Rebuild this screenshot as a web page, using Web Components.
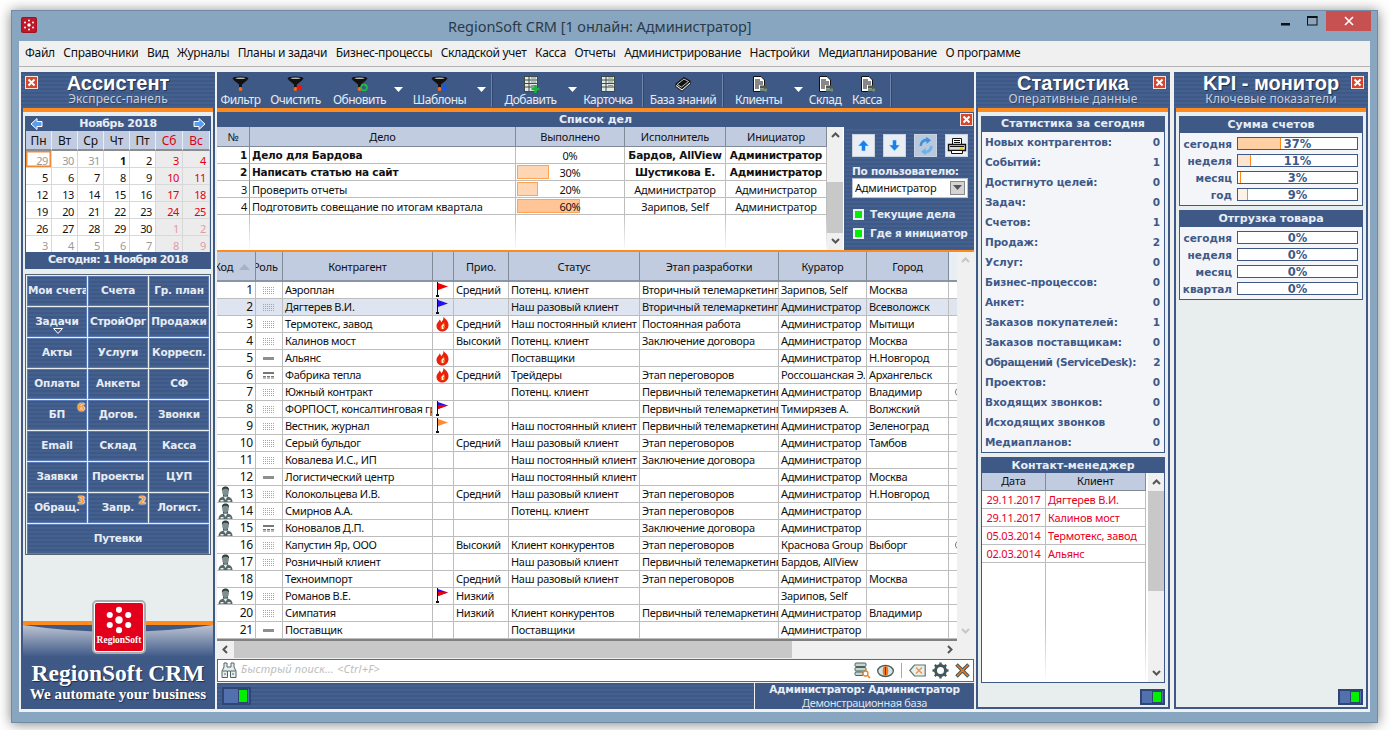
<!DOCTYPE html>
<html lang="ru">
<head>
<meta charset="utf-8">
<title>RegionSoft CRM</title>
<style>
	html, body { margin: 0; padding: 0; background: #fff; }
	body {
		width: 1390px;
		height: 730px;
		overflow: hidden;
		font: 11px/1.2 "Noto Sans", "Liberation Sans", sans-serif;
		letter-spacing: -.2px;
		color: #111;
		--bold: "DejaVu Sans", "Liberation Sans", sans-serif;
		--navy: #3f5987;
		--stripes: repeating-linear-gradient(#3f5987 0 2px, #44608f 2px 4px);
		--head: #c1cce0;
		--line: #bdbdbd;
		--orange: #ff8a1e;
	}
</style>
</head>
<body>
<crm-window>
	<crm-menu slot="menu">
		<span>Файл</span><span>Справочники</span><span>Вид</span><span>Журналы</span><span>Планы и задачи</span><span>Бизнес-процессы</span><span>Складской учет</span><span>Касса</span><span>Отчеты</span><span>Администрирование</span><span>Настройки</span><span>Медиапланирование</span><span>О программе</span>
	</crm-menu>

	<crm-panel heading="Ассистент" sub="Экспресс-панель" close="left">
		<crm-calendar></crm-calendar>
		<crm-tiles></crm-tiles>
		<crm-brand></crm-brand>
	</crm-panel>

	<crm-center>
		<crm-toolbar>
			<crm-tool icon="filter" style="--w:47px">Фильтр</crm-tool>
			<crm-tool icon="clear" style="--w:63px">Очистить</crm-tool>
			<crm-tool icon="refresh" style="--w:63px;--ml:1px">Обновить</crm-tool>
			<crm-tool-arrow style="--ml:-1px"></crm-tool-arrow>
			<crm-tool icon="template" style="--w:67px">Шаблоны</crm-tool>
			<crm-tool-arrow></crm-tool-arrow>
			<crm-tool-sep style="--ml:2px"></crm-tool-sep>
			<crm-tool icon="sheetadd" style="--w:65px;--ml:5px">Добавить</crm-tool>
			<crm-tool-arrow style="--ml:1px"></crm-tool-arrow>
			<crm-tool icon="sheet" style="--w:56px">Карточка</crm-tool>
			<crm-tool-sep style="--ml:6px"></crm-tool-sep>
			<crm-tool icon="book" style="--w:78px">База знаний</crm-tool>
			<crm-tool-sep></crm-tool-sep>
			<crm-tool icon="doc" style="--w:63px;--ml:3px">Клиенты</crm-tool>
			<crm-tool-arrow></crm-tool-arrow>
			<crm-tool icon="doc" style="--w:38px">Склад</crm-tool>
			<crm-tool icon="doc" style="--w:46px">Касса</crm-tool>
			<crm-tool-sep></crm-tool-sep>
		</crm-toolbar>
		<crm-tasks></crm-tasks>
		<crm-grid></crm-grid>
		<crm-search></crm-search>
		<crm-statusbar></crm-statusbar>
	</crm-center>

	<crm-panel heading="Статистика" sub="Оперативные данные" close="right" style="--ml:2px">
		<crm-stats heading="Статистика за сегодня">
			<crm-stat value="0">Новых контрагентов:</crm-stat>
			<crm-stat value="1">Событий:</crm-stat>
			<crm-stat value="0">Достигнуто целей:</crm-stat>
			<crm-stat value="0">Задач:</crm-stat>
			<crm-stat value="1">Счетов:</crm-stat>
			<crm-stat value="2">Продаж:</crm-stat>
			<crm-stat value="0">Услуг:</crm-stat>
			<crm-stat value="0">Бизнес-процессов:</crm-stat>
			<crm-stat value="0">Анкет:</crm-stat>
			<crm-stat value="1">Заказов покупателей:</crm-stat>
			<crm-stat value="0">Заказов поставщикам:</crm-stat>
			<crm-stat value="2" style="letter-spacing:-.45px">Обращений (ServiceDesk):</crm-stat>
			<crm-stat value="0">Проектов:</crm-stat>
			<crm-stat value="0">Входящих звонков:</crm-stat>
			<crm-stat value="0">Исходящих звонков</crm-stat>
			<crm-stat value="0">Медиапланов:</crm-stat>
		</crm-stats>
		<crm-contacts></crm-contacts>
		<crm-switch class="foot"></crm-switch>
	</crm-panel>

	<crm-panel heading="KPI - монитор" sub="Ключевые показатели" close="right" style="--ml:4px">
		<crm-kpi heading="Сумма счетов">
			<crm-kpi-bar value="37" tint="#ffd0a4">сегодня</crm-kpi-bar>
			<crm-kpi-bar value="11" tint="#ffe4d0">неделя</crm-kpi-bar>
			<crm-kpi-bar value="3" tint="#fff">месяц</crm-kpi-bar>
			<crm-kpi-bar value="9" tint="#fff1e6">год</crm-kpi-bar>
		</crm-kpi>
		<crm-kpi heading="Отгрузка товара">
			<crm-kpi-bar value="0">сегодня</crm-kpi-bar>
			<crm-kpi-bar value="0">неделя</crm-kpi-bar>
			<crm-kpi-bar value="0">месяц</crm-kpi-bar>
			<crm-kpi-bar value="0">квартал</crm-kpi-bar>
		</crm-kpi>
		<crm-switch class="foot"></crm-switch>
	</crm-panel>
</crm-window>

<script>
// shared inline icons
const funnel = extra => `<svg width="18" height="18" viewBox="0 0 18 18">
	<ellipse cx="8.500" cy="3.500" rx="8" ry="2" fill="#111"/>
	<ellipse cx="8.500" cy="3.200" rx="5" ry=".8" fill="#b9b9b9"/>
	<path d="M1 4.500 7 9.500V12H10V9.500L16 4.500z" fill="#111"/>
	<circle cx="8.500" cy="14" r="1.900" fill="#f4691b"/>${extra}</svg>`;
const sheetIcon = extra => `<svg width="18" height="18" viewBox="0 0 18 18">
	<rect x="2.500" y="1.500" width="13" height="15" fill="#e4ebe6" stroke="#3d4a45"/>
	<path d="M3 5H15M3 8.500H15M3 12H15M7 2V16" stroke="#3d4a45"/>
	<path d="M9 3H14M9 7H14M9 10.500H14" stroke="#88968f"/>${extra}</svg>`;
const docIcon = `<svg width="18" height="18" viewBox="0 0 18 18">
	<path d="M3.500 1.500H11L14.500 5V16.500H3.500z" fill="#fff" stroke="#111"/>
	<path d="M5 5H10M5 7H13M5 9H13M5 11H9M5 13H9" stroke="#111"/>
	<rect x="10" y="10.500" width="7" height="3" fill="#555"/><rect x="10" y="13.500" width="7" height="3" fill="#6d8f78"/></svg>`;
const flag = (a, b) => `<svg width="13" height="16" viewBox="0 0 13 16">
	<path d="M1.500 0V14" stroke="#111"/><rect x="0" y="13" width="3" height="2" fill="#111"/>
	<path d="M2 1 12 4.500 2 8z" fill="${a}"/>${b ? `<path d="M2 4H8L12 4.500 2 8z" fill="${b}"/>` : ""}</svg>`;
const ICONS = {
	filter: funnel(""),
	clear: funnel(`<path d="M10 10 15 15M15 10 10 15" stroke="#f01010" stroke-width="2"/>`),
	refresh: funnel(`<circle cx="13" cy="12.500" r="3" fill="none" stroke="#19c43a" stroke-width="1.600"/><path d="M12 9h3v3z" fill="#19c43a"/>`),
	template: funnel(`<path d="M12 9h2.500V12.500H17L13.200 16.500 9.500 12.500H12z" fill="#1558e8"/>`),
	sheet: sheetIcon(""),
	sheetadd: sheetIcon(`<path d="M13.500 10v8M9.500 14h8" stroke="#18b53a" stroke-width="2.400"/>`),
	doc: docIcon,
	book: `<svg width="18" height="18" viewBox="0 0 18 18"><path d="M1 9 10 2 17 6 8 14z" fill="#111"/><path d="M3 9.500 10 4 14.500 6.500 7.500 12z" fill="none" stroke="#eee" stroke-width=".8"/><path d="M1 9V12L8 17 17 9V6L8 14z" fill="#333"/><path d="M2 10.500 8 15 16 8" fill="none" stroke="#fff"/></svg>`,
	person: `<svg width="15" height="17" viewBox="0 0 15 17"><path d="M.5 16.500C.5 12 3 10.500 7.500 10.500S14.500 12 14.500 16.500z" fill="#55696a"/><path d="M5.500 10.500 7.500 14 9.500 10.500z" fill="#e6eeee"/><rect x="2.500" y="14" width="3" height="1.500" fill="#e6eeee"/><rect x="9.500" y="14" width="3" height="1.500" fill="#e6eeee"/><ellipse cx="7.500" cy="5.500" rx="3.300" ry="4.300" fill="#7d8f8f"/><path d="M4 5C3.500 1.500 5.500.5 7.500.5S11.500 1.500 11 5C10 3 9 2.800 7.500 2.800S5 3 4 5z" fill="#2e3d3d"/><path d="M5 8C6 10 9 10 10 8V10.500H5z" fill="#415252"/></svg>`,
	fire: `<svg width="13" height="16" viewBox="0 0 13 16"><path d="M7.500 .5C8.500 3 12.500 4 12.500 9 12.500 13 9.500 15.500 6.200 15.500S.3 13 .5 9.500C.7 6.500 3 6 3.500 3.500 4.800 4.500 5 5.500 5 6.500 6.500 5 7.800 3 7.500 .5z" fill="#e8200c"/><path d="M7.800 6.500C8.800 8.500 9.300 9.500 9 11.300 8.700 12.800 7.800 13.500 6.500 13.500S4.500 12.500 4.500 11.200C4.700 9.800 6 9.300 7.800 6.500z" fill="#f9702a"/><path d="M7.500 7.500 8 10H7L7.500 13H5.900L6 10.500H5z" fill="#fff0c8"/></svg>`,
	dots: `<svg width="12" height="7" viewBox="0 0 12 7"><path d="M0 .5H12M0 2.500H12M0 4.500H12M0 6.500H12" stroke="#a6a6a6" stroke-dasharray="1 1"/></svg>`,
	dash: `<svg width="12" height="7" viewBox="0 0 12 7"><rect y="2" width="11" height="3" fill="#8f8f8f"/></svg>`,
	table: `<svg width="12" height="7" viewBox="0 0 12 7"><rect width="11" height="2" fill="#777"/><path d="M0 4.500H11M0 6H11" stroke="#777" stroke-dasharray="3 1"/></svg>`,
	up: `<svg width="13" height="13" viewBox="0 0 13 13"><path d="M6.500 1 12 7H8.500V12H4.500V7H1z" fill="#1682e8" stroke="#cfe6fb" stroke-width=".6"/></svg>`,
	down: `<svg width="13" height="13" viewBox="0 0 13 13"><path d="M6.500 12 12 6H8.500V1H4.500V6H1z" fill="#1682e8" stroke="#cfe6fb" stroke-width=".6"/></svg>`,
	sync: `<svg width="18" height="18" viewBox="0 0 18 18"><path d="M9 1.500A7 7 0 0 0 2.500 9H5A4.500 4.500 0 0 1 9.500 4.500V7L14 3.200 9.500 0z" fill="#3f93dd"/><path d="M9 16.500A7 7 0 0 0 15.500 9H13A4.500 4.500 0 0 1 8.500 13.500V11L4 14.800 8.500 18z" fill="#6fb2e8"/></svg>`,
	printer: `<svg width="20" height="18" viewBox="0 0 20 18"><path d="M5.500 7V1.500H14.500V7" fill="#fff" stroke="#111"/><path d="M7 3.500H13M7 5.500H13" stroke="#111"/><path d="M1.500 7.500H18.500V13.500H1.500z" fill="#ddd" stroke="#111" stroke-width="1.400"/><path d="M3 9.500H17" stroke="#111"/><rect x="13" y="10.500" width="3" height="1.500" fill="#f0d020"/><path d="M4.500 13.500H15.500V16.500H4.500z" fill="#fff" stroke="#111"/></svg>`,
	binoculars: `<svg width="16" height="17" viewBox="0 0 16 17"><path d="M3 1H6V5H10V1H13V5L15 9V15.500H9.500V9H6.500V15.500H1V9L3 5z" fill="#e7eeee" stroke="#4f6468"/><path d="M1.500 9H6M10 9H14.500M3 12H5M11 12H13" stroke="#4f6468" stroke-width="1.200"/></svg>`,
	dbsearch: `<svg width="17" height="17" viewBox="0 0 17 17"><rect x="1" y="1" width="11" height="3.500" rx="1" fill="#c8d4cf" stroke="#4c6460"/><rect x="1" y="5.500" width="11" height="3.500" rx="1" fill="#c8d4cf" stroke="#4c6460"/><rect x="1" y="10" width="8" height="3.500" rx="1" fill="#c8d4cf" stroke="#4c6460"/><circle cx="11.500" cy="11.500" r="2.500" fill="#fff" stroke="#f08020" stroke-width="1.300"/><path d="M13.500 13.500 16 16" stroke="#f08020" stroke-width="1.600"/></svg>`,
	eye: `<svg width="17" height="14" viewBox="0 0 17 14"><ellipse cx="8.500" cy="7" rx="7.800" ry="5.500" fill="#d5e4e4" stroke="#46605e" stroke-width="1.300"/><ellipse cx="8.500" cy="7" rx="2.800" ry="5" fill="#f0751c"/><path d="M8.500 3V11" stroke="#7a3408"/></svg>`,
	eraser: `<svg width="17" height="13" viewBox="0 0 17 13"><path d="M.8 6.500 5.500 1H16.200V12H5.500z" fill="#e8f0ee" stroke="#5d7672" stroke-width="1.200"/><path d="M7 3.500 13 9.500M13 3.500 7 9.500" stroke="#f0923c" stroke-width="1.300"/></svg>`,
	gear: `<svg width="17" height="17" viewBox="0 0 17 17"><circle cx="8.500" cy="8.500" r="5" fill="none" stroke="#43585a" stroke-width="3"/><path d="M8.500 .5V3.500M8.500 13.500V16.500M.5 8.500H3.500M13.500 8.500H16.500M2.800 2.800 5 5M12 12 14.200 14.200M14.200 2.800 12 5M5 12 2.800 14.200" stroke="#43585a" stroke-width="2.400"/></svg>`,
	xmark: `<svg width="15" height="15" viewBox="0 0 15 15"><path d="M1.500 1.500 13.500 13.500M13.500 1.500 1.500 13.500" stroke="#45585a" stroke-width="3.600"/><path d="M2 2 13 13M13 2 2 13" stroke="#f07a20" stroke-width="1.500"/></svg>`
};
const closeBox = `<svg width="13" height="13" viewBox="0 0 13 13"><rect width="13" height="13" fill="#d8452a"/><rect x=".5" y=".5" width="12" height="12" fill="none" stroke="#f6e4dc"/><path d="M3.500 3.500 9.500 9.500M9.500 3.500 3.500 9.500" stroke="#fff" stroke-width="2"/></svg>`;
const chevron = (dir, c = "#555") => `<svg width="9" height="6" viewBox="0 0 9 6"><path d="${dir == "up" ? "M1 5 4.500 1.500 8 5" : "M1 1 4.500 4.500 8 1"}" fill="none" stroke="${c}" stroke-width="2"/></svg>`;

// tiny base class, every element keeps its own style in an open shadow root
class Base extends HTMLElement {
	constructor() {
		super();
		this.attachShadow({mode: "open"});
	}
	connectedCallback() {
		this.shadowRoot.innerHTML = this.render();
	}
	attr(name, fallback = "") {
		const v = this.getAttribute(name);
		return v === null ? fallback : v;
	}
}

class CrmWindow extends Base {
	render() {
		return `<style>
			:host { display: block; box-sizing: border-box; width: 1367px; height: 713px; margin: 10px 0 0 11px; background: #88a6c0; border: 1px solid #6f8ba5; box-shadow: 0 1px 12px rgba(0,0,0,.5); }
			.title { display: flex; align-items: flex-start; height: 30px; }
			.logo { margin: 6px 0 0 9px; }
			h1 { margin: 6px 0 0 411px; font: 14.500px/18px "Noto Sans", sans-serif; color: #2b3a48; letter-spacing: -.05px; white-space: nowrap; }
			.ctl { margin-left: auto; display: flex; margin-right: 6px; }
			.ctl span { display: grid; place-items: center; width: 27px; height: 20px; }
			.ctl .x { width: 45px; background: #c75050; margin-left: 0; }
			.client { background: #f0f0f0; margin: 0 7px 0 7px; height: 671px; display: flex; flex-direction: column; }
			.work { display: flex; padding: 5px 0 0 2px; }
		</style>
		<div class="title">
			<svg class="logo" width="16" height="16" viewBox="0 0 16 16"><rect width="16" height="16" rx="2" fill="#a01220"/><rect x="1" y="1" width="14" height="14" rx="2" fill="#c01828"/><g fill="#fff"><circle cx="8" cy="8" r="1.700"/><circle cx="8" cy="3.500" r="1"/><circle cx="8" cy="12.500" r="1"/><circle cx="4" cy="5.500" r="1"/><circle cx="12" cy="5.500" r="1"/><circle cx="4" cy="10.500" r="1"/><circle cx="12" cy="10.500" r="1"/></g></svg>
			<h1>RegionSoft CRM [1 онлайн: Администратор]</h1>
			<div class="ctl">
				<span><svg width="10" height="10" viewBox="0 0 10 10"><rect y="7" width="9" height="2.500" fill="#111"/></svg></span>
				<span><svg width="11" height="10" viewBox="0 0 11 10"><rect x=".5" y="1" width="9.500" height="8" fill="none" stroke="#111"/><rect y="0" width="10.500" height="2" fill="#111"/></svg></span>
				<span class="x"><svg width="10" height="10" viewBox="0 0 10 10"><path d="M1 1 9 9M9 1 1 9" stroke="#fff" stroke-width="1.600"/></svg></span>
			</div>
		</div>
		<div class="client">
			<slot name="menu"></slot>
			<div class="work"><slot></slot></div>
		</div>`;
	}
}

class CrmMenu extends Base {
	render() {
		return `<style>
			:host { display: block; height: 26px; box-sizing: border-box; font-size: 12px; letter-spacing: -.3px; color: #111; }
			div { display: flex; gap: 8.500px; align-items: center; height: 25px; padding-left: 6px; border-bottom: 1px solid #b4b4b4; white-space: nowrap; }
		</style><div><slot></slot></div>`;
	}
}

class CrmPanel extends Base {
	render() {
		const side = this.attr("close", "right");
		return `<style>
			:host { display: flex; flex-direction: column; box-sizing: border-box; flex: 0 0 194px; width: 194px; min-width: 0; height: 637px; margin-left: var(--ml, 0); background: #e8eeee; border: 2px solid var(--navy); position: relative; }
			header { box-sizing: border-box; flex: none; height: 36px; margin: -2px -2px 0; background: var(--stripes); padding-top: 2px; text-align: center; color: #fff; letter-spacing: 0; }
			h2 { margin: 0; font: bold 20px/19px "Liberation Sans", sans-serif; text-shadow: 1px 1px 1px #1d2c4a; }
			p { margin: 0; font-size: 12px; line-height: 12px; color: #c7d0de; letter-spacing: .1px; text-shadow: 1px 1px 0 #33486e; }
			.rule { height: 4px; background: var(--orange); flex: none; }
			.close { position: absolute; top: 2px; line-height: 0; ${side == "left" ? "left: 2px;" : "right: 2px;"} }
			main { display: flex; flex-direction: column; flex: 1; min-height: 0; min-width: 0; }
		</style>
		<header><h2>${this.attr("heading")}</h2><p>${this.attr("sub")}</p></header>
		<div class="rule"></div>
		<span class="close">${closeBox}</span>
		<main><slot></slot></main>`;
	}
}

class CrmCalendar extends Base {
	render() {
		const names = ["Пн", "Вт", "Ср", "Чт", "Пт", "Сб", "Вс"];
		const days = [29,30,31,1,2,3,4,5,6,7,8,9,10,11,12,13,14,15,16,17,18,19,20,21,22,23,24,25,26,27,28,29,30,1,2,3,4,5,6,7,8,9];
		const cells = days.map((d, i) => {
			const other = i < 3 || i > 32;
			const we = i % 7 > 4;
			let c = "d" + (other ? " o" : "") + (we ? " w" : "") + (i == 0 ? " t" : "") + (i == 3 ? " b" : "");
			return `<span class="${c}">${d}</span>`;
		}).join("");
		return `<style>
			:host { display: block; flex: none; margin: 4px 0 0 2px; width: 186px; box-sizing: border-box; border: 1px solid var(--navy); border-top: 0; background: #fff; letter-spacing: 0; }
			.top { display: flex; justify-content: space-between; align-items: center; box-sizing: border-box; height: 15px; margin: 0 -1px; padding: 1px 5px 0; background: var(--navy); color: #e8eef6; font: bold 11px/14px var(--bold); letter-spacing: -.3px; }
			.g { display: grid; grid-template-columns: repeat(5, 26px) 27px 27px; }
			.n { height: 20px; box-sizing: border-box; display: grid; place-items: center; padding-top: 2px; background: var(--head); border-right: 1px solid #e8eef5; border-bottom: 2px solid #8c8c8c; font-size: 12px; letter-spacing: -.2px; }
			.n.r { color: #e00012; }
			.days { height: 101px; overflow: hidden; }
			.d { height: 17px; box-sizing: border-box; text-align: right; padding: 2px 3px 0 0; font-size: 11px; letter-spacing: -.4px; line-height: 15px; border-right: 1px solid #d8d8d8; border-bottom: 1px solid #d8d8d8; }
			.o { color: #9a9a9a; }
			.w { background: #ececec; color: #e00012; }
			.o.w { color: #e39aa2; }
			.t { box-shadow: inset 0 0 0 1.500px #f08a38; }
			.b { font-weight: bold; }
			.today { height: 16px; margin: 0 -1px; background: var(--navy); color: #e8eef6; text-align: center; font: bold 11px/16px var(--bold); letter-spacing: -.6px; }
		</style>
		<div class="top">
			<svg width="13" height="12" viewBox="0 0 13 12"><path d="M1 6 7 .5V3.500H12V8.500H7V11.500z" fill="#5a9df0" stroke="#fff"/></svg>
			<span>Ноябрь 2018</span>
			<svg width="13" height="12" viewBox="0 0 13 12"><path d="M12 6 6 .5V3.500H1V8.500H6V11.500z" fill="#5a9df0" stroke="#fff"/></svg>
		</div>
		<div class="g">${names.map((n, i) => `<span class="n${i > 4 ? " r" : ""}">${n}</span>`).join("")}</div>
		<div class="g days">${cells}</div>
		<div class="today">Сегодня: 1 Ноября 2018</div>`;
	}
}

class CrmTiles extends Base {
	render() {
		const tiles = [["Мои счета"],["Счета"],["Гр. план"],["Задачи","","m"],["СтройОрг"],["Продажи"],["Акты"],["Услуги"],["Корресп."],["Оплаты"],["Анкеты"],["СФ"],["БП","6"],["Догов."],["Звонки"],["Email"],["Склад"],["Касса"],["Заявки"],["Проекты"],["ЦУП"],["Обращ.","3"],["Запр.","2"],["Логист."]];
		const html = tiles.map(([t, badge, more]) => `<div class="tile"><span>${t}</span>${badge ? `<b>${badge}</b>` : ""}${more ? `<svg class="more" width="10" height="6" viewBox="0 0 10 6"><path d="M.5 .5H9.500L5 5.500z" fill="none" stroke="#fff"/></svg>` : ""}</div>`).join("");
		return `<style>
			:host { display: block; flex: none; box-sizing: border-box; width: 186px; height: 281px; margin: 5px 0 0 2px; padding: 1px; border: 1px solid #5a6470; letter-spacing: -.2px; }
			.wrap { display: grid; grid-template-columns: repeat(3, 60px); gap: 1px; justify-content: center; grid-auto-rows: 30px; }
			.tile { position: relative; box-sizing: border-box; display: grid; place-items: center; padding-bottom: 2px; overflow: hidden; background: var(--stripes); border: 1px solid #5c7ab4; color: #e6ecf4; font: bold 10.500px/14px var(--bold); white-space: nowrap; }
			.wide { grid-column: 1 / 4; }
			b { position: absolute; top: 0; right: 1px; color: #ff9a2e; font-size: 11px; line-height: 13px; text-shadow: 0 0 1px #fff, 0 0 1px #fff, 0 0 2px #fff; }
			.more { position: absolute; bottom: 2px; left: 25px; }
		</style>
		<div class="wrap">${html}<div class="tile wide">Путевки</div></div>`;
	}
}

class CrmBrand extends Base {
	render() {
		const pts = [[26,20,4],[26,9,3.300],[26,31,3.300],[16,14.500,3.300],[36,14.500,3.300],[16,25.500,3.300],[36,25.500,3.300]];
		return `<style>
			:host { display: block; position: relative; margin-top: auto; height: 86px; background: var(--navy); color: #fff; text-align: center; letter-spacing: 0; }
			.rule { height: 4px; background: var(--orange); }
			.bg { display: block; position: absolute; left: 0; top: 4px; }
			.logo { position: absolute; left: 70px; top: -20px; box-sizing: border-box; width: 52px; height: 52px; background: #e3001b; border: 2px solid #fff; outline: 2px solid #a9aeb1; outline-offset: -1px; border-radius: 4px; text-align: center; }
			.logo svg { display: block; margin: -2px auto 0; }
			.logo span { display: block; margin-top: -4px; font: bold 9.500px/11px "Liberation Serif", serif; color: #fff; }
			.name { position: relative; margin-top: 36px; font: bold 23.500px/24px "Liberation Serif", serif; text-shadow: 1px 1px 1px #1d2c4a; white-space: nowrap; }
			.slogan { position: relative; margin-top: 0; font: bold 15.100px/18px "Liberation Serif", serif; white-space: nowrap; text-shadow: 1px 1px 1px #1d2c4a; }
		</style>
		<div class="rule"></div>
		<svg class="bg" width="190" height="40" viewBox="0 0 190 40">
			<defs><linearGradient id="sky" x1="0" y1="0" x2="0" y2="1"><stop offset="0" stop-color="#bcc4d3"/><stop offset="1" stop-color="#3f5987"/></linearGradient></defs>
			<path d="M0 0Q95 14 190 0V32H0z" fill="url(#sky)"/>
		</svg>
		<div class="logo">
			<svg width="48" height="38" viewBox="0 0 52 40" fill="#fff">${pts.map(p => `<circle cx="${p[0]}" cy="${p[1]}" r="${p[2]}"/>`).join("")}</svg>
			<span>RegionSoft</span>
		</div>
		<div class="name">RegionSoft CRM</div>
		<div class="slogan">We automate your business</div>`;
	}
}

class CrmCenter extends Base {
	render() {
		return `<style>
			:host { display: flex; flex-direction: column; flex: 0 0 757px; width: 757px; min-width: 0; height: 637px; margin-left: 2px; }
		</style><slot></slot>`;
	}
}

class CrmToolbar extends Base {
	render() {
		return `<style>
			:host { display: flex; box-sizing: border-box; height: 40px; background: var(--navy); border-bottom: 4px solid var(--orange); flex: none; }
		</style><slot></slot>`;
	}
}

class CrmTool extends Base {
	render() {
		return `<style>
			:host { display: flex; flex-direction: column; align-items: center; flex: 0 0 var(--w); margin-left: var(--ml, 0); color: #e4ebf4; font-size: 12px; letter-spacing: -.5px; line-height: 16px; white-space: nowrap; padding-top: 3px; box-sizing: border-box; }
			svg { display: block; }
			span { line-height: 0; height: 17px; }
		</style><span>${ICONS[this.attr("icon")]}</span><slot></slot>`;
	}
}

class CrmToolArrow extends Base {
	render() {
		return `<style>
			:host { display: flex; justify-content: center; flex: 0 0 16px; margin-left: var(--ml, 0); padding-top: 15px; box-sizing: border-box; }
		</style><svg width="9" height="5" viewBox="0 0 9 5"><path d="M0 0H9L4.500 5z" fill="#fff"/></svg>`;
	}
}

class CrmToolSep extends Base {
	render() {
		return `<style>
			:host { display: block; flex: 0 0 1px; margin: 2px 0 1px var(--ml, 0); background: #6d84ab; border-right: 1px solid #324870; }
		</style>`;
	}
}

class CrmTasks extends Base {
	render() {
		const rows = [
			[1, "Дело для Бардова", 0, "Бардов, AllView", "Администратор", true],
			[2, "Написать статью на сайт", 30, "Шустикова Е.", "Администратор", true],
			[3, "Проверить отчеты", 20, "Администратор", "Администратор", false],
			[4, "Подготовить совещание по итогам квартала", 60, "Зарипов, Self", "Администратор", false]
		];
		const body = rows.map(([n, t, p, a, b, bold]) => `<div class="row${bold ? " bold" : ""}">
			<span class="c num">${n}</span><span class="c txt">${t}</span>
			<span class="c pct">${p ? `<i style="width:${p * 1.05}px;background:${p > 50 ? "#ffc596" : "#ffd6b4"}"></i>` : ""}<em>${p}%</em></span>
			<span class="c mid">${a}</span><span class="c mid">${b}</span></div>`).join("");
		return `<style>
			:host { display: block; flex: none; height: 140px; box-sizing: border-box; border-bottom: 2px solid var(--orange); position: relative; background: #fff; }
			.title { height: 15px; background: var(--navy); color: #e8eef6; font: bold 11px/15px var(--bold); letter-spacing: 0; text-align: center; }
			.close { position: absolute; top: 1px; right: 1px; line-height: 0; }
			.body { display: flex; height: 123px; }
			.list { width: 610px; display: flex; flex-direction: column; }
			.row, .head, .rest { display: grid; grid-template-columns: 33px 266px 109px 101px 101px; }
			.head { height: 20px; flex: none; }
			.head span { display: grid; place-items: center; box-sizing: border-box; background: var(--head); border-right: 1px solid #7f8b96; border-bottom: 1px solid #7f8b96; }
			.row { height: 17px; flex: none; }
			.c { box-sizing: border-box; border-right: 1px solid var(--line); border-bottom: 1px solid var(--line); line-height: 17px; white-space: nowrap; overflow: hidden; position: relative; }
			.c:first-child { border-right-color: #8a8a8a; }
			.num { text-align: right; padding-right: 2px; }
			.txt { padding-left: 2px; }
			.mid { text-align: center; }
			.pct { text-align: center; }
			.pct i { position: absolute; left: 1px; top: 1px; height: 14px; box-sizing: border-box; border: 1px solid #ffa455; }
			.pct em { position: relative; font-style: normal; }
			.bold .c { font-family: var(--bold); font-weight: bold; font-size: 10.500px; }
			.bold .pct { font: inherit; font-weight: normal; line-height: 17px; }
			.rest { flex: 1; }
			.rest span { border-right: 1px solid; border-image: linear-gradient(#bbb, #fff) 1; }
			.bar { width: 16px; background: #f0f0f0; display: flex; flex-direction: column; align-items: center; justify-content: space-between; padding: 5px 0 6px; box-sizing: border-box; position: relative; }
			.thumb { position: absolute; top: 55px; left: 0; width: 100%; height: 51px; background: #c8c8c8; }
			.side { margin-left: 1px; width: 130px; background: var(--stripes); color: #e6ecf4; box-sizing: border-box; padding: 7px 0 0 8px; }
			.btns { display: flex; gap: 8px; }
			.btn { display: grid; place-items: center; width: 23px; height: 23px; background: #e8eef4; border: 1px solid #c8d4e4; box-sizing: border-box; }
			.btn.blue { background: #b9c8dc; }
			label { display: block; font: bold 10.500px/14px var(--bold); letter-spacing: -.25px; white-space: nowrap; }
			.by { margin: 6.500px 0 0; }
			.sel { display: flex; align-items: center; justify-content: space-between; width: 116px; height: 20px; box-sizing: border-box; background: #fff; color: #111; padding: 0 2px; border: 1px solid #b8c4d6; }
			.sel b { display: grid; place-items: center; width: 15px; height: 14px; background: #d4d4d4; border: 1px solid #888; box-sizing: border-box; }
			.chk { display: flex; align-items: center; gap: 6px; margin-top: 11px; font: bold 10.500px/11px var(--bold); letter-spacing: -.25px; white-space: nowrap; }
			.chk + .chk { margin-top: 8px; }
			.chk i { width: 11px; height: 11px; box-sizing: border-box; border: 2px solid #e7eef2; background: #00f000; margin-left: 1px; }
		</style>
		<div class="title">Список дел</div>
		<span class="close">${closeBox}</span>
		<div class="body">
			<div class="list">
				<div class="head"><span>№</span><span>Дело</span><span>Выполнено</span><span>Исполнитель</span><span>Инициатор</span></div>
				${body}
				<div class="rest"><span></span><span></span><span></span><span></span><span></span></div>
			</div>
			<div class="bar">${chevron("up")}<div class="thumb"></div>${chevron("down")}</div>
			<div class="side">
				<div class="btns">
					<span class="btn">${ICONS.up}</span><span class="btn">${ICONS.down}</span><span class="btn blue">${ICONS.sync}</span><span class="btn">${ICONS.printer}</span>
				</div>
				<label class="by">По пользователю:</label>
				<div class="sel"><span>Администратор</span><b><svg width="9" height="5" viewBox="0 0 9 5"><path d="M0 0H9L4.500 5z" fill="#555"/></svg></b></div>
				<div class="chk"><i></i>Текущие дела</div>
				<div class="chk"><i></i>Где я инициатор</div>
			</div>
		</div>`;
	}
}

class CrmGrid extends Base {
	render() {
		const S = "Средний", V = "Высокий", N = "Низкий";
		const A = "Администратор";
		const P1 = "Потенц. клиент", OT = "Наш разовый клиент", PC = "Наш постоянный клиент", SUP = "Поставщики", KK = "Клиент конкурентов";
		const SM = "Вторичный телемаркетинг", FM = "Первичный телемаркетинг", NG = "Этап переговоров", DG = "Заключение договора";
		const R = flag("#f00000"), B = flag("#2a10e8"), O = flag("#ff8a30"), BR = flag("#2a10e8", "#f00000"), F = ICONS.fire;
		const { dots, dash, table } = ICONS;
		const rows = [
			[1,0,dots,"Аэроплан",R,S,P1,SM,"Зарипов, Self","Москва"],
			[2,0,dots,"Дягтерев В.И.",B,"",OT,SM,A,"Всеволожск"],
			[3,0,dots,"Термотекс, завод",F,S,PC,"Постоянная работа",A,"Мытищи"],
			[4,0,dots,"Калинов мост","",V,P1,DG,A,"Москва"],
			[5,0,dash,"Альянс",F,"",SUP,"",A,"Н.Новгород"],
			[6,0,table,"Фабрика тепла",F,S,"Трейдеры",NG,"Россошанская Э.","Архангельск"],
			[7,0,dots,"Южный контракт","","",P1,FM,A,"Владимир",1],
			[8,0,dots,"ФОРПОСТ, консалтинговая группа",BR,"","",FM,"Тимирязев А.","Волжский"],
			[9,0,dots,"Вестник, журнал",O,"",PC,FM,A,"Зеленоград"],
			[10,0,dots,"Серый бульдог","",S,OT,NG,A,"Тамбов"],
			[11,0,dots,"Ковалева И.С., ИП","","",PC,DG,A,""],
			[12,0,dash,"Логистический центр","","",PC,"",A,"Москва"],
			[13,1,dots,"Колокольцева И.В.","",S,OT,NG,A,"Н.Новгород"],
			[14,1,dots,"Смирнов А.А.","","",P1,NG,A,""],
			[15,1,table,"Коновалов Д.П.","","","",DG,A,""],
			[16,0,dots,"Капустин Яр, ООО","",V,KK,NG,"Краснова Group","Выборг",1],
			[17,1,dots,"Розничный клиент","","",OT,FM,"Бардов, AllView",""],
			[18,0,"","Техноимпорт","",S,OT,NG,A,"Москва"],
			[19,1,dots,"Романов В.Е.",BR,N,"","","Зарипов, Self",""],
			[20,0,dots,"Симпатия","",N,KK,FM,A,"Владимир"],
			[21,0,dash,"Поставщик","","",SUP,"",A,""]
		];
		const at = `<svg width="8" height="12" viewBox="0 0 8 12"><circle cx="7" cy="6" r="4.500" fill="none" stroke="#777"/><circle cx="7" cy="6" r="2" fill="none" stroke="#777"/></svg>`;
		const body = rows.map(r => `<div class="row${r[0] == 2 ? " sel" : ""}">
			<span class="code">${r[1] ? `<i>${ICONS.person}</i>` : ""}${r[0]}</span>
			<span class="role">${r[2]}</span>
			<span class="t">${r[3]}</span><span class="mark">${r[4]}</span>
			<span class="t">${r[5]}</span><span class="t">${r[6]}</span><span class="t">${r[7]}</span><span class="t">${r[8]}</span><span class="t">${r[9]}</span>
			<span class="ext">${r[10] ? at : ""}</span></div>`).join("");
		return `<style>
			:host { display: block; flex: none; background: #f0f0f0; }
			.top { display: flex; }
			.table { width: 740px; background: #fff; }
			.head, .row { display: grid; grid-template-columns: 39px 27px 150px 21px 55px 131px 139px 88px 82px 8px; }
			.head { height: 30px; }
			.head span { display: flex; align-items: center; justify-content: center; box-sizing: border-box; padding-top: 2px; background: var(--head); border-right: 1px solid #7f8b96; border-bottom: 2px solid #8a96a6; overflow: hidden; white-space: nowrap; }
			.head .off { background: #e9edf4; border-right: 0; }
			.head .k { justify-content: flex-start; margin: 0; }
			.k u { text-decoration: none; margin-left: -3px; }
			.k svg { margin-left: 6px; flex: none; }
			.head .r { justify-content: flex-start; }
			.r u { text-decoration: none; margin-left: -3px; }
			.row { height: 17px; }
			.row > span { box-sizing: border-box; border-right: 1px solid var(--line); border-bottom: 1px solid var(--line); line-height: 16px; white-space: nowrap; overflow: hidden; }
			.sel { background: #dfe5f0; }
			.code { display: flex; justify-content: flex-end; padding-right: 2px; font-size: 12px; }
			.code i { margin-right: auto; margin-left: 1px; line-height: 0; }
			.role { display: grid; place-items: center; }
			.role svg { display: block; }
			.t { padding-left: 2px; letter-spacing: -.3px; }
			.mark { line-height: 0 !important; padding: 0 0 0 2px; }
			.mark svg { display: block; margin-left: 1px; }
			.row > .ext { border-right: 0; border-bottom-color: var(--line); display: flex; align-items: center; padding-left: 4px; }
			.row > .ext svg { flex: none; }
			.line { height: 2px; background: #808080; }
			.vbar { width: 17px; display: flex; flex-direction: column; align-items: center; justify-content: space-between; padding: 5px 0 5px; box-sizing: border-box; height: 387px; }
			.hbar { display: flex; align-items: center; justify-content: space-between; height: 17px; padding: 0 21px 0 5px; position: relative; }
			.hthumb { position: absolute; left: 17px; width: 558px; top: 0; bottom: 0; background: #c8c8c8; }
		</style>
		<div class="top">
			<div class="table">
				<div class="head">
					<span class="k"><u>Код</u><svg width="11" height="6" viewBox="0 0 11 6"><path d="M5.500 0 11 6H0z" fill="#a9b2c4"/></svg></span>
					<span class="r"><u>Роль</u></span><span>Контрагент</span><span></span><span>Прио.</span><span>Статус</span><span>Этап разработки</span><span>Куратор</span><span>Город</span><span class="off"></span>
				</div>
				${body}
			</div>
			<div class="vbar">${chevron("up", "#c6c6c6")}${chevron("down", "#c6c6c6")}</div>
		</div>
		<div class="line" style="width:740px"></div>
		<div class="hbar"><svg width="6" height="9" viewBox="0 0 6 9"><path d="M5 1 1.500 4.500 5 8" fill="none" stroke="#555" stroke-width="2"/></svg><div class="hthumb"></div><svg width="6" height="9" viewBox="0 0 6 9"><path d="M1 1 4.500 4.500 1 8" fill="none" stroke="#555" stroke-width="2"/></svg></div>`;
	}
}

class CrmSearch extends Base {
	render() {
		return `<style>
			:host { display: flex; align-items: center; box-sizing: border-box; flex: none; height: 23px; margin-top: 1px; background: #fff; border: 1px solid #666; padding: 0 3px 0 3px; }
			em { margin: 0 0 4px 4px; color: #bdbdbd; font-size: 11px; letter-spacing: .2px; }
			span { display: flex; align-items: center; margin-left: auto; gap: 6px; }
			svg { display: block; }
			u { display: block; width: 1px; height: 15px; background: #aaa; margin: 0 1px; }
		</style>
		${ICONS.binoculars}<em>Быстрый поиск... &lt;Ctrl+F&gt;</em>
		<span>${ICONS.dbsearch}${ICONS.eye}<u></u>${ICONS.eraser}${ICONS.gear}${ICONS.xmark}</span>`;
	}
}

class CrmSwitch extends Base {
	render() {
		return `<style>
			:host { display: block; box-sizing: border-box; width: 25px; height: 16px; background: #5270ad; border: 2px solid #2f4674; position: relative; }
			:host(.foot) { margin: auto 3px 2px auto; }
			:host(.wide) { width: 29px; height: 18px; }
			i { position: absolute; right: 1px; top: 0; bottom: 0; width: 10px; box-sizing: border-box; border: 1px solid #2f4674; background: #00f000; }
		</style><i></i>`;
	}
}

class CrmStatusbar extends Base {
	render() {
		return `<style>
			:host { display: flex; flex: none; height: 26px; margin-top: 1px; background: var(--stripes); color: #e8eef6; overflow: hidden; }
			.l { flex: 1; padding: 4px 0 0 5px; }
			.r { width: 220px; box-sizing: border-box; border-left: 1px solid #f0f0f0; text-align: center; background: var(--navy); }
			b { display: block; font: bold 10.500px/13px var(--bold); letter-spacing: -.25px; }
			span { display: block; font-size: 11px; line-height: 13px; letter-spacing: -.35px; color: #dde4ee; white-space: nowrap; }
		</style>
		<div class="l"><crm-switch class="wide"></crm-switch></div>
		<div class="r"><b>Администратор: Администратор</b><span>Демонстрационная база</span></div>`;
	}
}

class CrmStats extends Base {
	render() {
		return `<style>
			:host { display: block; flex: none; box-sizing: border-box; width: 184px; height: 337px; margin: 4px 0 0 3px; background: #f3f5f9; border: 1px solid var(--navy); }
			h3 { margin: -1px -1px 0; height: 16px; background: var(--navy); color: #e8eef6; font: bold 11px/16px var(--bold); letter-spacing: 0; text-align: center; }
			div { padding-top: 1px; }
		</style><h3>${this.attr("heading")}</h3><div><slot></slot></div>`;
	}
}

class CrmStat extends Base {
	render() {
		return `<style>
			:host { display: flex; justify-content: space-between; height: 20px; padding: 0 4px 0 3px; font: bold 10.500px/19px var(--bold); letter-spacing: -.1px; color: var(--navy); white-space: nowrap; }
		</style><slot></slot><span>${this.attr("value")}</span>`;
	}
}

class CrmContacts extends Base {
	render() {
		const rows = [["29.11.2017", "Дягтерев В.И."], ["29.11.2017", "Калинов мост"], ["05.03.2014", "Термотекс, завод"], ["02.03.2014", "Альянс"]];
		return `<style>
			:host { display: flex; flex: none; flex-direction: column; box-sizing: border-box; width: 184px; height: 226px; margin: 4px 0 0 3px; background: #fff; border: 1px solid var(--navy); }
			h3 { margin: -1px -1px 0; flex: none; height: 16px; background: var(--navy); color: #e8eef6; font: bold 11px/17px var(--bold); letter-spacing: 0; text-align: center; }
			.body { display: flex; flex: 1; min-height: 0; }
			.list { width: 164px; display: flex; flex-direction: column; }
			.head, .row, .rest { display: grid; grid-template-columns: 64px 100px; }
			.head { height: 18px; }
			.head span { display: grid; place-items: center; background: var(--head); box-sizing: border-box; padding-bottom: 2px; border-right: 1px solid #7f8b96; border-bottom: 1px solid #7f8b96; }
			.row { height: 18px; }
			.row span { box-sizing: border-box; border-right: 1px solid var(--line); border-bottom: 1px solid var(--line); color: #e8001c; line-height: 17px; padding-left: 2px; white-space: nowrap; }
			.row span:first-child { text-align: center; padding: 0; }
			.rest { flex: 1; }
			.rest span { border-right: 1px solid; border-image: linear-gradient(#bbb 50%, #fff) 1; }
			.bar { margin-left: 2px; width: 16px; background: #f0f0f0; position: relative; display: flex; flex-direction: column; align-items: center; justify-content: space-between; padding: 6px 0; box-sizing: border-box; }
			.thumb { position: absolute; left: 0; right: 0; top: 18px; height: 100px; background: #c8c8c8; }
		</style>
		<h3>Контакт-менеджер</h3>
		<div class="body">
			<div class="list">
				<div class="head"><span>Дата</span><span>Клиент</span></div>
				${rows.map(r => `<div class="row"><span>${r[0]}</span><span>${r[1]}</span></div>`).join("")}
				<div class="rest"><span></span><span></span></div>
			</div>
			<div class="bar">${chevron("up")}<div class="thumb"></div>${chevron("down")}</div>
		</div>`;
	}
}

class CrmKpi extends Base {
	render() {
		return `<style>
			:host { display: block; flex: none; box-sizing: border-box; width: 184px; height: 90px; margin: 4px 0 0 3px; background: #f3f5f9; border: 1px solid var(--navy); }
			h3 { margin: -1px -1px 4px; height: 17px; background: var(--navy); color: #e8eef6; font: bold 11px/17px var(--bold); letter-spacing: 0; text-align: center; }
		</style><h3>${this.attr("heading")}</h3><slot></slot>`;
	}
}

class CrmKpiBar extends Base {
	render() {
		const v = +this.attr("value", 0);
		return `<style>
			:host { display: flex; align-items: flex-start; height: 17px; color: var(--navy); font: bold 10.500px/15px var(--bold); letter-spacing: 0; }
			.label { width: 52px; text-align: right; white-space: nowrap; }
			.bar { position: relative; box-sizing: border-box; width: 121px; height: 13px; margin-left: 5px; background: #fff; border: 1px solid var(--navy); text-align: center; font-size: 11.500px; line-height: 13px; }
			i { position: absolute; left: 0; top: 0; bottom: 0; box-sizing: border-box; border-right: 1px solid var(--orange); }
			span span { position: relative; }
		</style>
		<span class="label"><slot></slot></span>
		<span class="bar">${v ? `<i style="width:${v * 1.16}px;background:${this.attr("tint", "#fff")}"></i>` : ""}<span>${v}%</span></span>`;
	}
}

customElements.define("crm-window", CrmWindow);
customElements.define("crm-menu", CrmMenu);
customElements.define("crm-panel", CrmPanel);
customElements.define("crm-calendar", CrmCalendar);
customElements.define("crm-tiles", CrmTiles);
customElements.define("crm-brand", CrmBrand);
customElements.define("crm-center", CrmCenter);
customElements.define("crm-toolbar", CrmToolbar);
customElements.define("crm-tool", CrmTool);
customElements.define("crm-tool-arrow", CrmToolArrow);
customElements.define("crm-tool-sep", CrmToolSep);
customElements.define("crm-tasks", CrmTasks);
customElements.define("crm-grid", CrmGrid);
customElements.define("crm-search", CrmSearch);
customElements.define("crm-switch", CrmSwitch);
customElements.define("crm-statusbar", CrmStatusbar);
customElements.define("crm-stats", CrmStats);
customElements.define("crm-stat", CrmStat);
customElements.define("crm-contacts", CrmContacts);
customElements.define("crm-kpi", CrmKpi);
customElements.define("crm-kpi-bar", CrmKpiBar);
</script>
</body>
</html>
